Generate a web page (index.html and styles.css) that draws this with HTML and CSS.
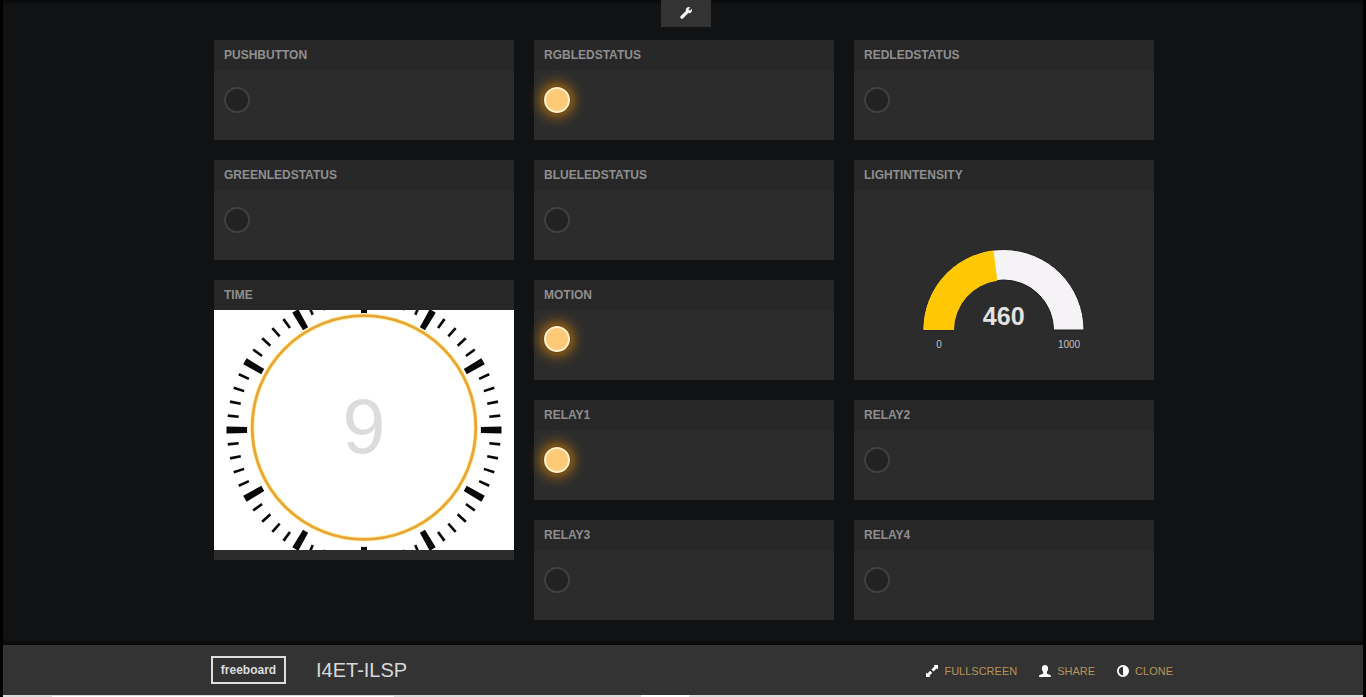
FILE: index.html
```html
<!DOCTYPE html>
<html lang="en">
<head>
<meta charset="utf-8">
<title>I4ET-ILSP</title>
<link rel="stylesheet" href="styles.css">
</head>
<body>
<div class="app">
  <main class="board">
    <button class="toggle" aria-label="Settings">
      <svg width="12" height="12" viewBox="0 0 12 12"><path fill="#fff" stroke="#fff" stroke-width=".5" d="M10 .5 8.400 2.100 8.700 3.400l1.300.3L11.600 2.100c.5 1.400.1 2.600-.8 3.300-.8.6-1.700.7-2.600.4L3.200 11.100c-.6.7-1.500.8-2.200.3-.8-.6-.8-1.500-.1-2.200L6.200 4C5.900 2.600 6.200 1.600 7 .9 7.900.2 9 .1 10 .5Z"/></svg>
    </button>
    <div class="columns">
      <div class="column">
        <section class="pane"><h2>PUSHBUTTON</h2><i class="light"></i></section>
        <section class="pane"><h2>GREENLEDSTATUS</h2><i class="light"></i></section>
        <section class="pane pane-time"><h2>TIME</h2>
          <svg class="clock" width="300" height="240" viewBox="0 0 300 240">
            <rect width="300" height="240" fill="#fff"/>
            <circle class="minor" cx="150" cy="120" r="131.500" pathLength="360"/>
            <circle class="major" cx="150" cy="120" r="127.200" pathLength="360"/>
            <circle cx="150" cy="117.500" r="111.800" fill="#fff" stroke="#fff4a8" stroke-width="4.500"/>
            <circle cx="150" cy="117.500" r="111.800" fill="none" stroke="#eaa53a" stroke-width="2.800"/>
            <text x="150" y="142.500" class="hour">9</text>
          </svg>
        </section>
      </div>
      <div class="column">
        <section class="pane"><h2>RGBLEDSTATUS</h2><i class="light on"></i></section>
        <section class="pane"><h2>BLUELEDSTATUS</h2><i class="light"></i></section>
        <section class="pane"><h2>MOTION</h2><i class="light on raised"></i></section>
        <section class="pane"><h2>RELAY1</h2><i class="light on"></i></section>
        <section class="pane"><h2>RELAY3</h2><i class="light"></i></section>
      </div>
      <div class="column">
        <section class="pane"><h2>REDLEDSTATUS</h2><i class="light"></i></section>
        <section class="pane pane-gauge"><h2>LIGHTINTENSITY</h2>
          <svg class="gauge" width="300" height="190" viewBox="0 0 300 190">
            <path d="M69 140a80.500 80.500 0 0 1 161 0h-30.500a50 50 0 0 0-100 0Z" fill="#f5f3f5" stroke="#1d1d1f" stroke-width="1"/>
            <path d="M69.500 140A80 80 0 0 1 139.500 60.200L143.300 90.700A50 50 0 0 0 100 140Z" fill="#ffc803"/>
            <text x="149.700" y="135" class="value">460</text>
            <text x="85" y="158" class="bound">0</text>
            <text x="215" y="158" class="bound">1000</text>
          </svg>
        </section>
        <section class="pane"><h2>RELAY2</h2><i class="light"></i></section>
        <section class="pane"><h2>RELAY4</h2><i class="light"></i></section>
      </div>
    </div>
  </main>
  <footer class="bar">
    <span class="logo">freeboard</span>
    <h1>I4ET-ILSP</h1>
    <nav class="links">
      <a><svg width="12" height="12" viewBox="0 0 12 12" fill="#fff"><path d="M7.500 0H12v4.500L10.800 3.300 7.500 6.600 5.400 4.500 8.700 1.200ZM0 7.500l1.200 1.200 2.900-2.900 2.100 2.100-2.900 2.900L4.500 12H0Z"/></svg>FULLSCREEN</a>
      <a><svg width="12" height="12" viewBox="0 0 12 12" fill="#fff"><path d="M6 0c2 0 3.100 1.300 3.100 3.200C9.100 5 8.500 6.200 7.800 7v1.200c.3.700 1.700 1 3 1.600.8.300 1.200.8 1.200 2.200H0c0-1.400.4-1.900 1.200-2.200 1.300-.6 2.700-.9 3-1.600V7C3.500 6.200 2.900 5 2.900 3.200 2.900 1.300 4 0 6 0Z"/></svg>SHARE</a>
      <a><svg width="12" height="12" viewBox="0 0 12 12"><circle cx="6" cy="6" r="5.100" fill="none" stroke="#fff" stroke-width="1.800"/><path d="M6 1a5 5 0 0 1 0 10Z" fill="#fff"/></svg>CLONE</a>
    </nav>
  </footer>
  <div class="strip"><b class="s1"></b><b class="s2"></b><b class="s3"></b><b class="s4"></b></div>
</div>
</body>
</html>
```
FILE: styles.css
```css
* { box-sizing: border-box; }
body {
  margin: 0;
  background: #000;
  font-family: "Liberation Sans", Arial, sans-serif;
}
.app {
  display: flex;
  flex-direction: column;
  height: 697px;
  margin: 0 3px;
  overflow: hidden;
}
.board {
  height: 645px;
  background: linear-gradient(#08090a, #111214 5px, #111214 639px, #08090a);
}
.toggle {
  display: flex;
  align-items: center;
  justify-content: center;
  width: 50px;
  height: 27px;
  margin: 0 0 13px 658px;
  padding: 0 0 1px;
  border: 0;
  background: #333;
}
.columns {
  display: flex;
  gap: 20px;
  margin-left: 211px;
}
.column {
  display: flex;
  flex-direction: column;
  gap: 20px;
  width: 300px;
}
.pane {
  height: 100px;
  background: #2c2c2c;
}
.pane-time { height: 280px; }
.pane-gauge { height: 220px; }
.pane h2 {
  height: 30px;
  margin: 0;
  padding: 0 10px;
  background: #272727;
  color: #8f8f90;
  font-size: 12px;
  line-height: 30px;
}
.light {
  display: block;
  width: 26px;
  height: 26px;
  margin: 17px 0 0 10px;
  border: 2px solid #404040;
  border-radius: 50%;
  background: #222;
}
.light.on {
  border-color: #fff0cf;
  background: #ffca78;
  box-shadow: 0 0 2px #331c00, 0 0 15px 1px #ff9900;
}
.light.raised { margin-top: 16px; }
.clock, .gauge { display: block; }
.minor, .major { fill: none; stroke: #080808; }
.minor {
  stroke-width: 11;
  stroke-dasharray: 1.15 4.85;
  stroke-dashoffset: 0.575;
}
.major {
  stroke-width: 20.6px;
  stroke-dasharray: 2.9 27.1;
  stroke-dashoffset: 1.45;
}
.hour {
  fill: #dcdcdc;
  font-size: 77px;
  text-anchor: middle;
}
.value {
  fill: #e2e2e2;
  font-size: 25px;
  font-weight: bold;
  text-anchor: middle;
}
.bound {
  fill: #c2c2c2;
  font-size: 10px;
  text-anchor: middle;
}
.bar {
  display: flex;
  align-items: center;
  height: 50px;
  padding: 0 190px 0 208px;
  background: #333;
}
.logo {
  width: 75px;
  height: 28px;
  border: 2px solid #dedede;
  color: #dcdcdc;
  font-size: 12px;
  font-weight: bold;
  line-height: 24px;
  text-align: center;
}
.bar h1 {
  margin: 0 0 0 30px;
  color: #d8d8d8;
  font-size: 20px;
  font-weight: normal;
}
.links {
  display: flex;
  gap: 22px;
  margin: 2px 0 0 auto;
}
.links a {
  display: flex;
  align-items: center;
  gap: 6px;
  color: #b8935a;
  font-size: 11px;
}
.strip {
  display: flex;
  height: 2px;
  background: #dcdcdc;
}
.s1 { width: 49px; }
.s2 { width: 342px; margin-top: 1px; background: #fff; }
.s3 { width: 247px; }
.s4 { width: 48px; background: #fff; }
```
